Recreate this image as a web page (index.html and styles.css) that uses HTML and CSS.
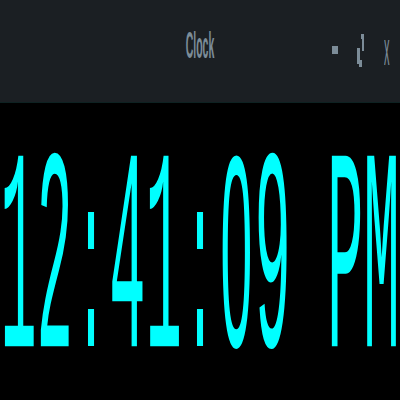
FILE: index.html
```html
<!DOCTYPE html>
<html>
<head>
<meta charset="utf-8">
<link rel="stylesheet" href="styles.css">
</head>
<body>
<div class="window">
  <header class="titlebar">
    <div class="spacer"></div>
    <div class="title">Clock</div>
    <div class="controls">
      <span class="btn-min"></span>
      <svg class="btn-max" width="8" height="33" viewBox="0 0 8 33">
        <path d="M4 0h3v17h-2v-12h-1z" fill="#7c8c98"/>
        <path d="M0 14h3v12h2v7h-3v-3h-2z" fill="#7c8c98"/>
      </svg>
      <span class="btn-close">x</span>
    </div>
  </header>
  <main class="face">
    <div class="time">12<span class="colon">:</span>41<span class="colon">:</span><span class="zero">0</span>9 PM</div>
  </main>
</div>
</body>
</html>
```
FILE: styles.css
```css
html, body {
  margin: 0;
  padding: 0;
  background: #000;
}
body {
  width: 400px;
  height: 400px;
  overflow: hidden;
}
.window {
  display: flex;
  flex-direction: column;
  height: 400px;
}
.titlebar {
  flex: none;
  height: 90px;
  padding-bottom: 12px;
  background: #1b1f23;
  border-bottom: 1px solid #0e2222;
  display: grid;
  grid-template-columns: 1fr auto 1fr;
  align-items: center;
}
.title {
  font-family: "Liberation Sans", Arial, sans-serif;
  font-weight: bold;
  font-size: 10.5px;
  line-height: 1;
  color: #7c8c98;
  transform: scaleY(3.45);
}
.controls {
  justify-self: end;
  display: flex;
  align-items: center;
  gap: 19px;
  padding-right: 10px;
  margin-top: 10px;
}
.btn-min {
  display: block;
  width: 6px;
  height: 8px;
  background: #7c8c98;
}
.btn-max {
  display: block;
}
.btn-close {
  display: block;
  width: 6px;
  font-family: "Liberation Sans", Arial, sans-serif;
  font-size: 11px;
  line-height: 1;
  color: #7c8c98;
  transform: scaleY(4.2);
}
.face {
  flex: 1;
  min-height: 0;
  padding-top: 29px;
  display: flex;
  align-items: center;
  justify-content: center;
}
.time {
  font-family: "Liberation Mono", "Courier New", monospace;
  font-size: 60.5px;
  line-height: 0.72;
  color: #00ffff;
  white-space: pre;
  transform: scaleY(4.78);
}
.colon {
  display: inline-block;
  width: 0.69em;
  font-size: 0.87em;
  text-align: center;
}
.zero {
  display: inline-block;
  width: 0.635em;
  font-family: "Liberation Sans", Arial, sans-serif;
  font-size: 0.945em;
  text-align: center;
}
```
